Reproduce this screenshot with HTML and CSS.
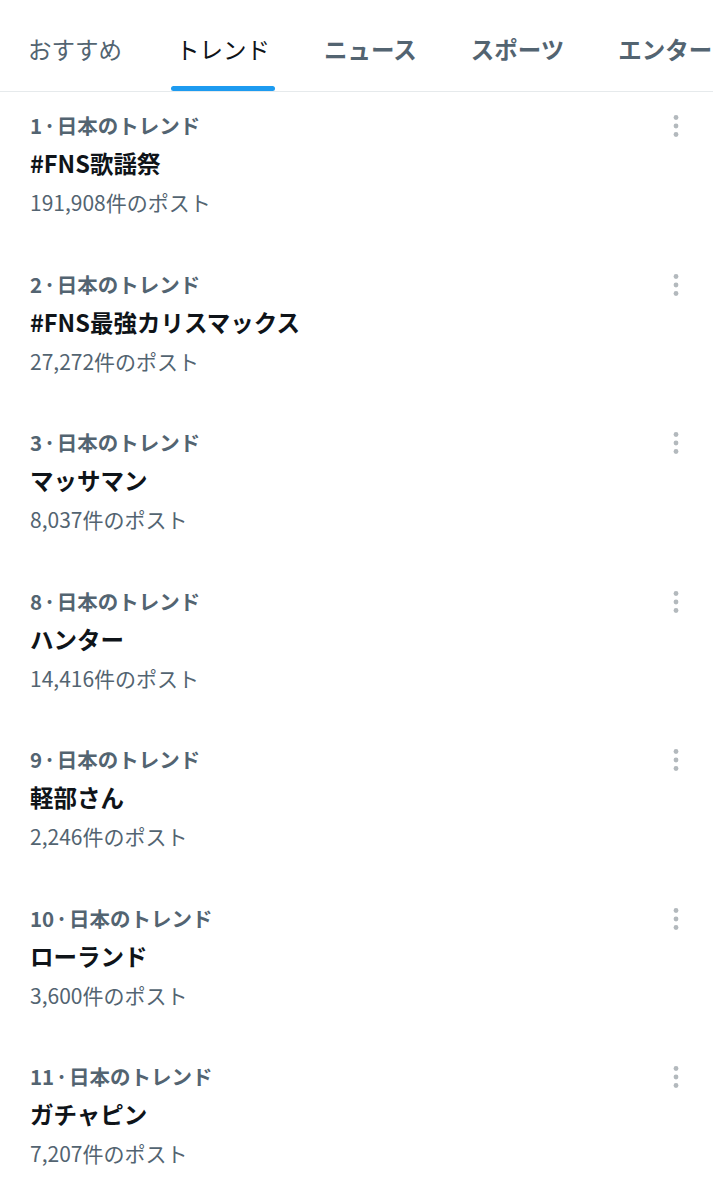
FILE: index.html
```html
<!DOCTYPE html>
<html lang="ja">
<head>
    <meta charset="UTF-8">
    <meta name="viewport" content="width=device-width, initial-scale=1.0">
    <title>話題を検索</title>
    <link rel="stylesheet" href="styles.css">
</head>
<body>
    <nav class="tabs">
        <div class="tab tab-light">おすすめ<span class="tab-bar"></span></div>
        <div class="tab tab-active">トレンド<span class="tab-bar"></span></div>
        <div class="tab">ニュース<span class="tab-bar"></span></div>
        <div class="tab">スポーツ<span class="tab-bar"></span></div>
        <div class="tab">エンターテイメント<span class="tab-bar"></span></div>
    </nav>

    <div class="trend-list">
        <div class="trend">
            <div class="trend-body">
                <div class="trend-meta">1&#8202;·&#8202;日本のトレンド</div>
                <div class="trend-name">#FNS歌謡祭</div>
                <div class="trend-count">191,908件のポスト</div>
            </div>
            <svg class="trend-more" viewBox="0 0 20 24"><circle cx="10" cy="3.5" r="2.4"/><circle cx="10" cy="12" r="2.4"/><circle cx="10" cy="20.5" r="2.4"/></svg>
        </div>
        <div class="trend">
            <div class="trend-body">
                <div class="trend-meta">2&#8202;·&#8202;日本のトレンド</div>
                <div class="trend-name">#FNS最強カリスマックス</div>
                <div class="trend-count">27,272件のポスト</div>
            </div>
            <svg class="trend-more" viewBox="0 0 20 24"><circle cx="10" cy="3.5" r="2.4"/><circle cx="10" cy="12" r="2.4"/><circle cx="10" cy="20.5" r="2.4"/></svg>
        </div>
        <div class="trend">
            <div class="trend-body">
                <div class="trend-meta">3&#8202;·&#8202;日本のトレンド</div>
                <div class="trend-name">マッサマン</div>
                <div class="trend-count">8,037件のポスト</div>
            </div>
            <svg class="trend-more" viewBox="0 0 20 24"><circle cx="10" cy="3.5" r="2.4"/><circle cx="10" cy="12" r="2.4"/><circle cx="10" cy="20.5" r="2.4"/></svg>
        </div>
        <div class="trend">
            <div class="trend-body">
                <div class="trend-meta">8&#8202;·&#8202;日本のトレンド</div>
                <div class="trend-name">ハンター</div>
                <div class="trend-count">14,416件のポスト</div>
            </div>
            <svg class="trend-more" viewBox="0 0 20 24"><circle cx="10" cy="3.5" r="2.4"/><circle cx="10" cy="12" r="2.4"/><circle cx="10" cy="20.5" r="2.4"/></svg>
        </div>
        <div class="trend">
            <div class="trend-body">
                <div class="trend-meta">9&#8202;·&#8202;日本のトレンド</div>
                <div class="trend-name">軽部さん</div>
                <div class="trend-count">2,246件のポスト</div>
            </div>
            <svg class="trend-more" viewBox="0 0 20 24"><circle cx="10" cy="3.5" r="2.4"/><circle cx="10" cy="12" r="2.4"/><circle cx="10" cy="20.5" r="2.4"/></svg>
        </div>
        <div class="trend">
            <div class="trend-body">
                <div class="trend-meta">10&#8202;·&#8202;日本のトレンド</div>
                <div class="trend-name">ローランド</div>
                <div class="trend-count">3,600件のポスト</div>
            </div>
            <svg class="trend-more" viewBox="0 0 20 24"><circle cx="10" cy="3.5" r="2.4"/><circle cx="10" cy="12" r="2.4"/><circle cx="10" cy="20.5" r="2.4"/></svg>
        </div>
        <div class="trend">
            <div class="trend-body">
                <div class="trend-meta">11&#8202;·&#8202;日本のトレンド</div>
                <div class="trend-name">ガチャピン</div>
                <div class="trend-count">7,207件のポスト</div>
            </div>
            <svg class="trend-more" viewBox="0 0 20 24"><circle cx="10" cy="3.5" r="2.4"/><circle cx="10" cy="12" r="2.4"/><circle cx="10" cy="20.5" r="2.4"/></svg>
        </div>
    </div>
</body>
</html>
```

FILE: styles.css
```css
body{
    margin:0;
    background:#fff;
    font-family:"Noto Sans CJK JP","Noto Sans",sans-serif;
    color:#0f1419;
    overflow:hidden;
}
/* タブ */
.tabs{
    display:flex;
    height:91px;
    border-bottom:1px solid #e6eaec;
    overflow:hidden;
    white-space:nowrap;
}
.tab{
    display:flex;
    flex-direction:column;
    align-items:center;
    flex-shrink:0;
    padding:34px 27px 0;
    font-size:23.5px;
    line-height:30px;
    font-weight:700;
    color:#536471;
}
.tab:first-child{
    padding-left:28px;
}
.tab-light{
    font-weight:400;
}
.tab-active{
    font-weight:400;
    color:#0f1419;
}
.tab-bar{
    display:block;
    width:calc(100% + 10px);
    height:5px;
    margin-top:auto;
    border-radius:3px;
}
.tab-active .tab-bar{
    background:#1d9bf0;
}
/* トレンド一覧 */
.trend{
    display:flex;
    justify-content:space-between;
    padding:19px 27px 33.5px 30px;
}
.trend-meta{
    font-size:20.5px;
    line-height:28px;
    font-weight:700;
    color:#536471;
}
.trend-name{
    font-size:23.5px;
    line-height:48px;
    font-weight:700;
    color:#0f1419;
}
.trend-count{
    font-size:21px;
    line-height:30px;
    color:#536471;
}
.trend-more{
    width:20px;
    height:24px;
    margin-top:3px;
    fill:#b3b9bd;
}
```
